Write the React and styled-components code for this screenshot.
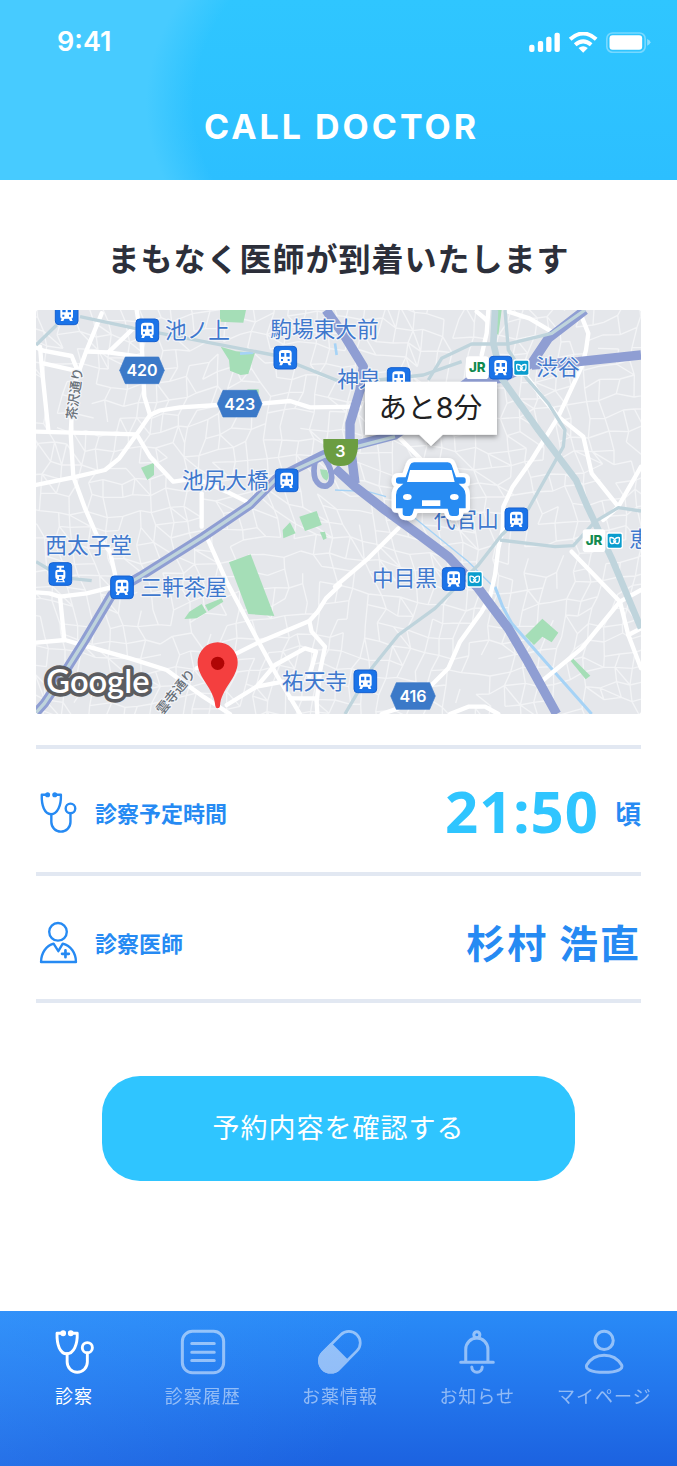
import React from "react";
import styled, { createGlobalStyle } from "styled-components";

const jp = `"Noto Sans CJK JP", sans-serif`;

const GlobalStyle = createGlobalStyle`
  *, *::before, *::after { box-sizing: border-box; }
  body { margin: 0; background: #fff; font-family: ${jp}; }
  h1, h2, dl, dd, ul { margin: 0; padding: 0; }
`;

const Screen = styled.div`
  display: flex;
  flex-direction: column;
  min-height: 100vh;
`;

const Header = styled.header`
  padding: 28px 26px 33px 57px;
  color: #fff;
  background: radial-gradient(ellipse 600px 306px at 770px 104px, transparent 96%, #47cbff 104%),
    linear-gradient(#2fc6ff, #2cbfff);
`;

const StatusBar = styled.div`
  display: flex;
  align-items: center;
  justify-content: space-between;
  height: 28px;
`;

const Clock = styled.time`
  font: 600 27px/28px Inter, sans-serif;
`;

const StatusIcons = styled.svg`
  width: 122px;
  height: 21px;
`;

const BrandTitle = styled.h1`
  margin: 51px 0 0 -25px;
  font: 700 34px/40px Inter, sans-serif;
  letter-spacing: 3px;
  text-align: center;
`;

const Main = styled.main`
  display: flex;
  flex-direction: column;
  padding: 53px 36px 73px;
`;

const Heading = styled.h2`
  color: #2c2f3a;
  font-size: 32px;
  font-weight: 700;
  line-height: 48px;
  letter-spacing: 1px;
  text-align: center;
`;

const MapView = styled.svg`
  display: block;
  width: 100%;
  height: auto;
  margin-top: 29px;
  border-radius: 3px;
  overflow: hidden;
`;

const MapLabel = styled.text`
  font-family: ${jp};
  font-size: ${(p) => p.$size || 65}px;
  font-weight: ${(p) => p.$weight || 400};
  fill: ${(p) => p.$color || "#3f78cd"};
  stroke: #f3f5f9;
  stroke-width: 7px;
  stroke-linejoin: round;
  paint-order: stroke;
`;

const ShieldText = styled.text`
  font: 600 48px Inter, sans-serif;
  fill: #fff;
  text-anchor: middle;
`;

const JrText = styled.text`
  font: 800 40px Inter, sans-serif;
  fill: #128a50;
  text-anchor: middle;
`;

const GoogleText = styled.text`
  font: 600 98px Lato, sans-serif;
  fill: #fff;
  stroke: #5b5c60;
  stroke-width: 22px;
  stroke-linejoin: round;
  paint-order: stroke;
`;

const BubbleText = styled.text`
  font: 400 86px Inter, ${jp};
  fill: #1f1f22;
  text-anchor: middle;
`;

const Details = styled.dl`
  margin-top: 31px;
  border-top: 4px solid #e2e8f2;
`;

const DetailRow = styled.div`
  display: flex;
  align-items: center;
  height: 127px;
  padding-top: 10px;
  border-bottom: 4px solid #e2e8f2;
  color: #268af3;

  &:first-child {
    padding-top: 4px;
  }
`;

const DetailIcon = styled.svg`
  width: 36px;
  height: 41px;
  margin-left: 4px;
  flex: none;
  overflow: visible;
`;

const DetailLabel = styled.dt`
  margin-left: 19px;
  padding-bottom: 2px;
  font-size: 22px;
  font-weight: 700;
  line-height: 32px;
`;

const DetailValue = styled.dd`
  display: flex;
  align-items: center;
  margin-left: auto;
  padding-bottom: 4px;
  font-size: 39px;
  font-weight: 700;
  line-height: 60px;
  letter-spacing: 2px;
  white-space: pre;
`;

const Time = styled.time`
  color: #2fc5ff;
  font: 700 58px/60px "Noto Sans", sans-serif;
  letter-spacing: 1px;
`;

const TimeSuffix = styled.span`
  margin-left: 16px;
  padding-top: 4px;
  font-size: 26px;
  letter-spacing: 0;
`;

const PrimaryButton = styled.button`
  height: 105px;
  margin: 73px 66px 0;
  padding: 0 0 3px;
  border: 0;
  border-radius: 38px;
  background: #2fc5ff;
  color: #fff;
  font: 400 27px/40px ${jp};
  letter-spacing: 1px;
  cursor: pointer;
`;

const TabBar = styled.nav`
  margin-top: auto;
  height: 155px;
  padding: 19px 14px 0;
  background: linear-gradient(120deg, rgba(70, 160, 255, 0.3), rgba(70, 160, 255, 0) 55%),
    linear-gradient(#298bf7, #2377ed 50%, #1c62e0);
`;

const TabList = styled.ul`
  display: grid;
  grid-template-columns: 120fr 137fr 137fr 137fr 117fr;
  list-style: none;
`;

const Tab = styled.a`
  display: flex;
  flex-direction: column;
  align-items: center;
  gap: 9px;
  color: #fff;
  opacity: ${(p) => (p.$active ? 1 : 0.5)};
  font-size: 18px;
  line-height: 24px;
  letter-spacing: 1px;
  text-decoration: none;
  white-space: nowrap;
`;

const TabIcon = styled.svg`
  height: 44px;
  width: 44px;
  overflow: visible;
`;

const stroke = { fill: "none", stroke: "currentColor", strokeLinecap: "round", strokeLinejoin: "round" };

const Stethoscope = ({ width = 7 }) => (
  <g {...stroke} strokeWidth={width}>
    <path d="M22 8H5C4 40 13 65 32 65S62 40 61 8H44" />
    <path d="M33 65V88a28 28 0 0 0 56 0V63" />
    <circle cx="89" cy="48" r="14" />
    <circle cx="22" cy="8" r="4" fill="currentColor" />
    <circle cx="43" cy="8" r="4" fill="currentColor" />
  </g>
);

const Doctor = () => (
  <g {...stroke} strokeWidth="7">
    <circle cx="53" cy="29" r="26" />
    <path d="M3 118C3 92 18 70 40 64L54 86L67 64C91 70 106 92 106 118Z" />
    <path d="M75 84v20M65 94h20" strokeWidth="8" />
  </g>
);

const tabs = [
  { label: "診察", box: "-2 -1 108 122", active: true, icon: <Stethoscope width={8} /> },
  {
    label: "診察履歴",
    box: "0 0 131 131",
    icon: (
      <g {...stroke} strokeWidth="9">
        <rect x="4" y="4" width="123" height="123" rx="30" />
        <path d="M32 40h67M32 66h67M32 91h67" />
      </g>
    ),
  },
  {
    label: "お薬情報",
    box: "0 0 131 131",
    icon: (
      <g {...stroke} strokeWidth="8" transform="rotate(-45 65 65)">
        <rect x="-7" y="31" width="144" height="68" rx="34" />
        <path d="M27 31H62V99H27A34 34 0 0 1 27 31Z" fill="currentColor" />
      </g>
    ),
  },
  {
    label: "お知らせ",
    box: "-13 0 131 131",
    icon: (
      <g {...stroke} strokeWidth="9">
        <circle cx="52" cy="14" r="9" />
        <path d="M19 95V57a33 33 0 0 1 66 0V95M4 96H101M37 110a15 15 0 0 0 31 0" />
      </g>
    ),
  },
  {
    label: "マイページ",
    box: "-8 0 131 131",
    icon: (
      <g {...stroke} strokeWidth="9">
        <circle cx="58" cy="31" r="27" />
        <path d="M6 104C17 86 36 75 58 75S99 86 110 104C116 115 98 126 58 126S0 115 6 104Z" />
      </g>
    ),
  },
];

/* Fine street mesh: a warped grid with gaps, from a fixed seed. */
const sideStreets = (() => {
  let seed = 11;
  const rnd = () => {
    seed = (seed * 16807) % 2147483647;
    return seed / 2147483647;
  };
  const cols = 42;
  const rows = 30;
  const pts = [];
  for (let j = 0; j < rows; j++) {
    pts.push([]);
    for (let i = 0; i < cols; i++) {
      pts[j].push([
        Math.round(i * 48 - 60 + 36 * Math.sin(j * 0.33 + i * 0.08) + rnd() * 24),
        Math.round(j * 48 - 60 + 38 * Math.sin(i * 0.27) + rnd() * 24),
      ]);
    }
  }
  let d = "";
  for (let j = 0; j < rows - 1; j++) {
    for (let i = 0; i < cols - 1; i++) {
      if (rnd() > 0.26) d += `M${pts[j][i]}L${pts[j][i + 1]}`;
      if (rnd() > 0.26) d += `M${pts[j][i]}L${pts[j + 1][i]}`;
      if (rnd() > 0.82) d += `M${pts[j][i]}L${pts[j + 1][i + 1]}`;
    }
  }
  return d;
})();

const parks = [
  "552,0 630,0 622,38 552,35",
  "554,110 600,124 657,128 637,192 614,195 582,182 579,150",
  "315,473 354,458 354,495 334,510",
  "632,238 668,238 668,255",
  "1382,0 1397,0 1387,75 1380,70",
  "579,757 644,733 715,918 637,912",
  "445,927 460,905 497,882 512,907 482,925",
  "507,885 557,865 562,875 517,903",
  "740,660 762,637 779,670 742,685",
  "790,620 842,603 857,645 807,663",
  "852,667 867,665 872,685 862,690",
  "1519,926 1567,968 1547,997 1519,980 1494,1005 1467,978",
  "1612,1046 1663,1097 1649,1108 1604,1053",
];

const roads = [
  "0,365 302,373",
  "0,525 112,502 207,480 250,445 302,373 342,315 370,302 432,292 547,285 682,280 762,273 822,292 970,290",
  "342,315 325,260 317,100 302,0",
  "302,373 342,440 412,515 480,505 572,545 632,575",
  "497,550 497,650",
  "512,680 572,815 662,985 722,1095 792,1212",
  "12,110 17,170 37,360",
  "0,112 22,122 107,138 122,175",
  "22,160 132,185",
  "197,10 152,120 112,230 104,370 112,500 147,595 182,675 222,725 242,815",
  "152,125 217,127 312,140",
  "217,127 292,55",
  "0,847 40,850 72,860 152,850 222,833",
  "72,860 85,990",
  "0,998 87,990 132,1003 282,1045 392,1080 502,1160 582,1212",
  "912,825 870,865 845,905 820,933 662,1000 602,1030 482,1075",
  "820,933 827,965 867,1010 852,1085 842,1175 844,1212",
  "572,1185 662,1130 717,1065 807,1015 840,1025 820,1100",
  "662,1130 742,1115",
  "762,1165 842,1165",
  "897,830 997,745 1087,655",
  "1087,380 1157,450",
  "1637,20 1657,70 1650,120 1637,170 1567,320 1487,450 1430,530 1402,590 1400,660 1387,715 1377,795 1362,860 1337,905 1272,995 1237,1075 1187,1125",
  "1472,200 1517,260 1567,320 1642,380 1667,490 1747,590 1815,470",
  "1747,590 1702,630",
  "1607,725 1752,875 1815,840",
  "1752,875 1777,975 1815,1075",
  "1777,975 1815,955",
  "1522,1110 1637,1015 1752,875",
  "1037,1212 1087,1195",
  "1242,1212 1297,1190 1347,1190 1387,1212",
  "1357,0 1352,70 1337,135",
  "1322,5 1352,30",
  "1417,5 1480,25 1547,65",
];

const highways = [
  "0,1208 25,1180 62,1125 147,990 227,855 260,830 312,800 502,680 642,585 722,505 862,435 942,410 1077,375 1200,290 1297,215 1397,205 1487,160 1537,85 1647,0",
  "1487,165 1627,155 1815,135",
  "870,0 927,80 982,170 972,240 942,340 942,400 957,520",
  "897,475 957,530 1047,600 1150,675 1237,740 1327,835 1417,955 1470,1045 1562,1212",
];

const rails = [
  "0,105 62,45",
  "132,20 297,55 582,110 712,135 912,215 1027,210 1162,195 1277,155",
  "1407,0 1417,120 1472,205 1537,280 1587,360 1582,410 1477,597 1397,675 1327,765 1197,895 1087,975 1007,1075 927,1212",
  "1177,210 1217,145 1307,102 1417,102 1547,70 1647,0",
  "1392,690 1557,710 1612,707 1677,635 1747,593 1815,603",
  "0,755 42,780",
  "102,805 167,812",
  "0,1208 25,1180 62,1125 147,990 227,855 260,830 312,800 502,680 642,585 722,505 862,440 942,415 1077,380",
];

const stations = [
  [92, 10], [334, 61], [748, 143], [752, 511], [1088, 207], [1394, 173],
  [258, 832], [1441, 628], [1253, 807], [988, 1114],
];

const places = [
  ["池ノ上", 387, 84],
  ["駒場東大前", 703, 82],
  ["池尻大橋", 438, 533],
  ["神泉", 904, 230],
  ["渋谷", 1501, 195],
  ["西太子堂", 28, 729],
  ["三軒茶屋", 313, 855],
  ["祐天寺", 738, 1137],
  ["代官山", 1193, 652],
  ["中目黒", 1008, 829],
  ["恵", 1780, 712],
];

const shields = [["420", 318, 181], ["423", 611, 281], ["416", 1131, 1158]];
const metros = [[1456, 173], [1316, 808], [1736, 692]];
const jrs = [[1324, 173], [1674, 692]];

const carBody =
  "M180 285Q183 277 192 277H293Q302 277 305 285L318 322H340Q347 322 347 328V336Q347 341 340 341H326L340 355Q347 363 347 375V415H327V430Q327 438 319 438H307Q298 438 297 430L293 416H192L188 430Q186 438 179 438H167Q158 438 158 430V415H138V375Q138 363 145 355L160 341H146Q138 341 138 334V328Q138 322 146 322H167Z";

const at = (x, y) => `translate(${x} ${y})`;

const StationMark = ({ x, y }) => (
  <g transform={at(x, y)}>
    <rect x="-34" y="-34" width="68" height="68" rx="11" fill="#1a73e8" stroke="#1660cf" strokeWidth="3" />
    <path d="M-19-13q0-10 11-10H8q11 0 11 10V10q0 6-6 6H-13q-6 0-6-6Z" fill="#fff" />
    <path d="M-14 14-18 23H-10L-6 15H6L10 23H18L14 14Z" fill="#fff" />
    <path d="M-13-14H-3V-3H-13ZM3-14H13V-3H3ZM-13 4H-7V10H-13ZM7 4H13V10H7Z" fill="#1a73e8" />
  </g>
);

const TramMark = ({ x, y }) => (
  <g transform={at(x, y)}>
    <rect x="-34" y="-34" width="68" height="68" rx="11" fill="#1a73e8" stroke="#1660cf" strokeWidth="3" />
    <path d="M-11-25H11V-19H3V-13H9Q15-13 15-6V9Q15 15 10 16L14 25H-14L-10 16Q-15 15-15 9V-6Q-15-13-9-13H-3V-19H-11Z" fill="#fff" />
    <path d="M-9-6H9V3H-9ZM-4 8H4V14H-4ZM-6 18H6L8 22H-8Z" fill="#1a73e8" />
  </g>
);

const MetroMark = ({ x, y }) => (
  <g transform={at(x, y)}>
    <rect x="-25" y="-25" width="50" height="50" rx="7" fill="#fff" />
    <rect x="-21" y="-21" width="42" height="42" rx="4" fill="#0a9dce" />
    <path d="M-14-10V0Q-14 9-7 9Q0 9 4-1M14-10V0Q14 9 7 9Q0 9-4-1M-14-9Q-5-11 0-3Q5-11 14-9" fill="none" stroke="#fff" strokeWidth="4" />
  </g>
);

const ArrivalMap = () => (
  <MapView viewBox="0 0 1815 1212" role="img" aria-label="医師の現在地">
    <defs>
      <filter id="shadow" x="-20%" y="-20%" width="140%" height="150%">
        <feDropShadow dx="0" dy="7" stdDeviation="8" floodColor="#000" floodOpacity="0.4" />
      </filter>
      <filter id="softShadow" x="-20%" y="-20%" width="140%" height="150%">
        <feDropShadow dx="0" dy="9" stdDeviation="10" floodColor="#000" floodOpacity="0.2" />
      </filter>
    </defs>
    <rect width="1815" height="1212" fill="#e5e7eb" />
    <path d={sideStreets} stroke="#f3f4f6" strokeWidth="4" fill="none" />
    <g fill="#a5deb7">
      {parks.map((p) => <polygon key={p} points={p} />)}
    </g>
    <g fill="none" stroke="#a6d3f6">
      <path d="M1137 625L1297 755L1377 835" strokeWidth="4" />
      <path d="M1377 830L1400 890L1427 940L1537 1065L1667 1212" strokeWidth="9" />
      <path d="M897 540L997 545L1050 560" strokeWidth="4" />
      <path d="M612 131L652 128M897 100L902 135" strokeWidth="8" />
    </g>
    <g fill="none" stroke="#fff" strokeWidth="13" strokeLinejoin="round" strokeLinecap="round">
      {roads.map((p) => <polyline key={p} points={p} />)}
    </g>
    <g fill="none" stroke="#8f9ed3" strokeWidth="28" strokeLinejoin="round">
      {highways.map((p) => <polyline key={p} points={p} />)}
      <path strokeWidth="17" d="M838 450Q830 485 838 508Q850 532 872 528Q892 520 886 490Q880 460 860 440" />
    </g>
    <path d="M852 478L872 480Q884 500 872 512Q856 508 852 478Z" fill="#a5deb7" />
    <g fill="none" stroke="#bfd4dc" strokeWidth="10" strokeLinejoin="round">
      {rails.map((p) => <polyline key={p} points={p} />)}
      <polyline strokeWidth="20" points="1377,0 1372,100 1397,205 1507,360 1620,510 1652,585 1727,745 1815,955" />
    </g>

    {places.map(([name, x, y]) => <MapLabel key={name} x={x} y={y}>{name}</MapLabel>)}
    <MapLabel $size={39} $weight={500} $color="#687078" transform="translate(119 330) rotate(-82)">茶沢通り</MapLabel>
    <MapLabel $size={40} $weight={500} $color="#687078" transform="translate(380 1216) rotate(-51)">雲寺通り</MapLabel>

    {stations.map(([x, y]) => <StationMark key={`${x}-${y}`} x={x} y={y} />)}
    <TramMark x={73} y={792} />
    {jrs.map(([x, y]) => (
      <g key={x} transform={at(x, y)}>
        <rect x="-34" y="-34" width="68" height="68" rx="10" fill="#fff" />
        <JrText y="14">JR</JrText>
      </g>
    ))}
    {metros.map(([x, y]) => <MetroMark key={x} x={x} y={y} />)}
    {shields.map(([n, x, y]) => (
      <g key={n} transform={at(x, y)}>
        <path d="M-50-40H50L67 0L50 40H-50L-67 0Z" fill="#3b79c8" stroke="#3b79c8" strokeWidth="2" strokeLinejoin="round" />
        <ShieldText y="18">{n}</ShieldText>
      </g>
    ))}
    <path d="M862 387H966V410Q962 468 914 468Q866 468 862 410Z" fill="#6b9d42" />
    <ShieldText x="913" y="442">3</ShieldText>

    <g filter="url(#shadow)">
      <path d="M987 215H1383V374H1220L1185 408L1150 374H987Z" fill="#fff" />
    </g>
    <BubbleText x="1183" y="324">あと8分</BubbleText>

    <g transform={at(942, 180)}>
      <path d={carBody} filter="url(#softShadow)" fill="#fff" stroke="#fff" strokeWidth="26" strokeLinejoin="round" />
      <path d={carBody} fill="#278bf2" />
      <path fill="#fff" d="M180 300H305L314 336H171ZM216 391H271V408H216Z" />
      <ellipse cx="172" cy="381" rx="13" ry="9" fill="#fff" />
      <ellipse cx="313" cy="381" rx="13" ry="9" fill="#fff" />
    </g>

    <path d="M538 1188C535 1135 485 1105 485 1057A60 60 0 0 1 605 1057C605 1105 555 1135 552 1188Q551 1195 545 1195T538 1188Z" fill="#f43f3f" />
    <circle cx="545" cy="1060" r="20" fill="#b00505" />
    <GoogleText x="31" y="1148">Google</GoogleText>
  </MapView>
);

export default function App() {
  return (
    <Screen>
      <GlobalStyle />
      <Header>
        <StatusBar>
          <Clock>9:41</Clock>
          <StatusIcons viewBox="0 0 365 63" fill="#fff" aria-hidden="true">
            <rect x="0" y="38" width="16" height="22" rx="6" />
            <rect x="26" y="27" width="16" height="33" rx="6" />
            <rect x="51" y="14" width="16" height="46" rx="6" />
            <rect x="76" y="2" width="16" height="58" rx="6" />
            <g fill="none" stroke="#fff" strokeWidth="12">
              <path d="M123 22Q162-13 201 22" />
              <path d="M138 38Q162 18 186 38" />
            </g>
            <path d="M148 48Q162 38 176 48L162 62Z" />
            <rect x="233" y="3" width="115" height="58" rx="17" fill="none" stroke="#fff" strokeWidth="5" opacity="0.35" />
            <rect x="241" y="10" width="98" height="43" rx="9" />
            <path d="M354 21Q364 25 364 31T354 41Z" opacity="0.45" />
          </StatusIcons>
        </StatusBar>
        <BrandTitle>CALL DOCTOR</BrandTitle>
      </Header>

      <Main>
        <Heading>まもなく医師が到着いたします</Heading>
        <ArrivalMap />
        <Details>
          <DetailRow>
            <DetailIcon viewBox="0 0 105 120" aria-hidden="true"><Stethoscope /></DetailIcon>
            <DetailLabel>診察予定時間</DetailLabel>
            <DetailValue>
              <Time>21:50</Time>
              <TimeSuffix>頃</TimeSuffix>
            </DetailValue>
          </DetailRow>
          <DetailRow>
            <DetailIcon viewBox="0 0 106 121" aria-hidden="true"><Doctor /></DetailIcon>
            <DetailLabel>診察医師</DetailLabel>
            <DetailValue>杉村 浩直</DetailValue>
          </DetailRow>
        </Details>
        <PrimaryButton type="button">予約内容を確認する</PrimaryButton>
      </Main>

      <TabBar>
        <TabList>
          {tabs.map((t) => (
            <li key={t.label}>
              <Tab href="#" $active={t.active} aria-current={t.active ? "page" : undefined}>
                <TabIcon viewBox={t.box} aria-hidden="true">{t.icon}</TabIcon>
                {t.label}
              </Tab>
            </li>
          ))}
        </TabList>
      </TabBar>
    </Screen>
  );
}
